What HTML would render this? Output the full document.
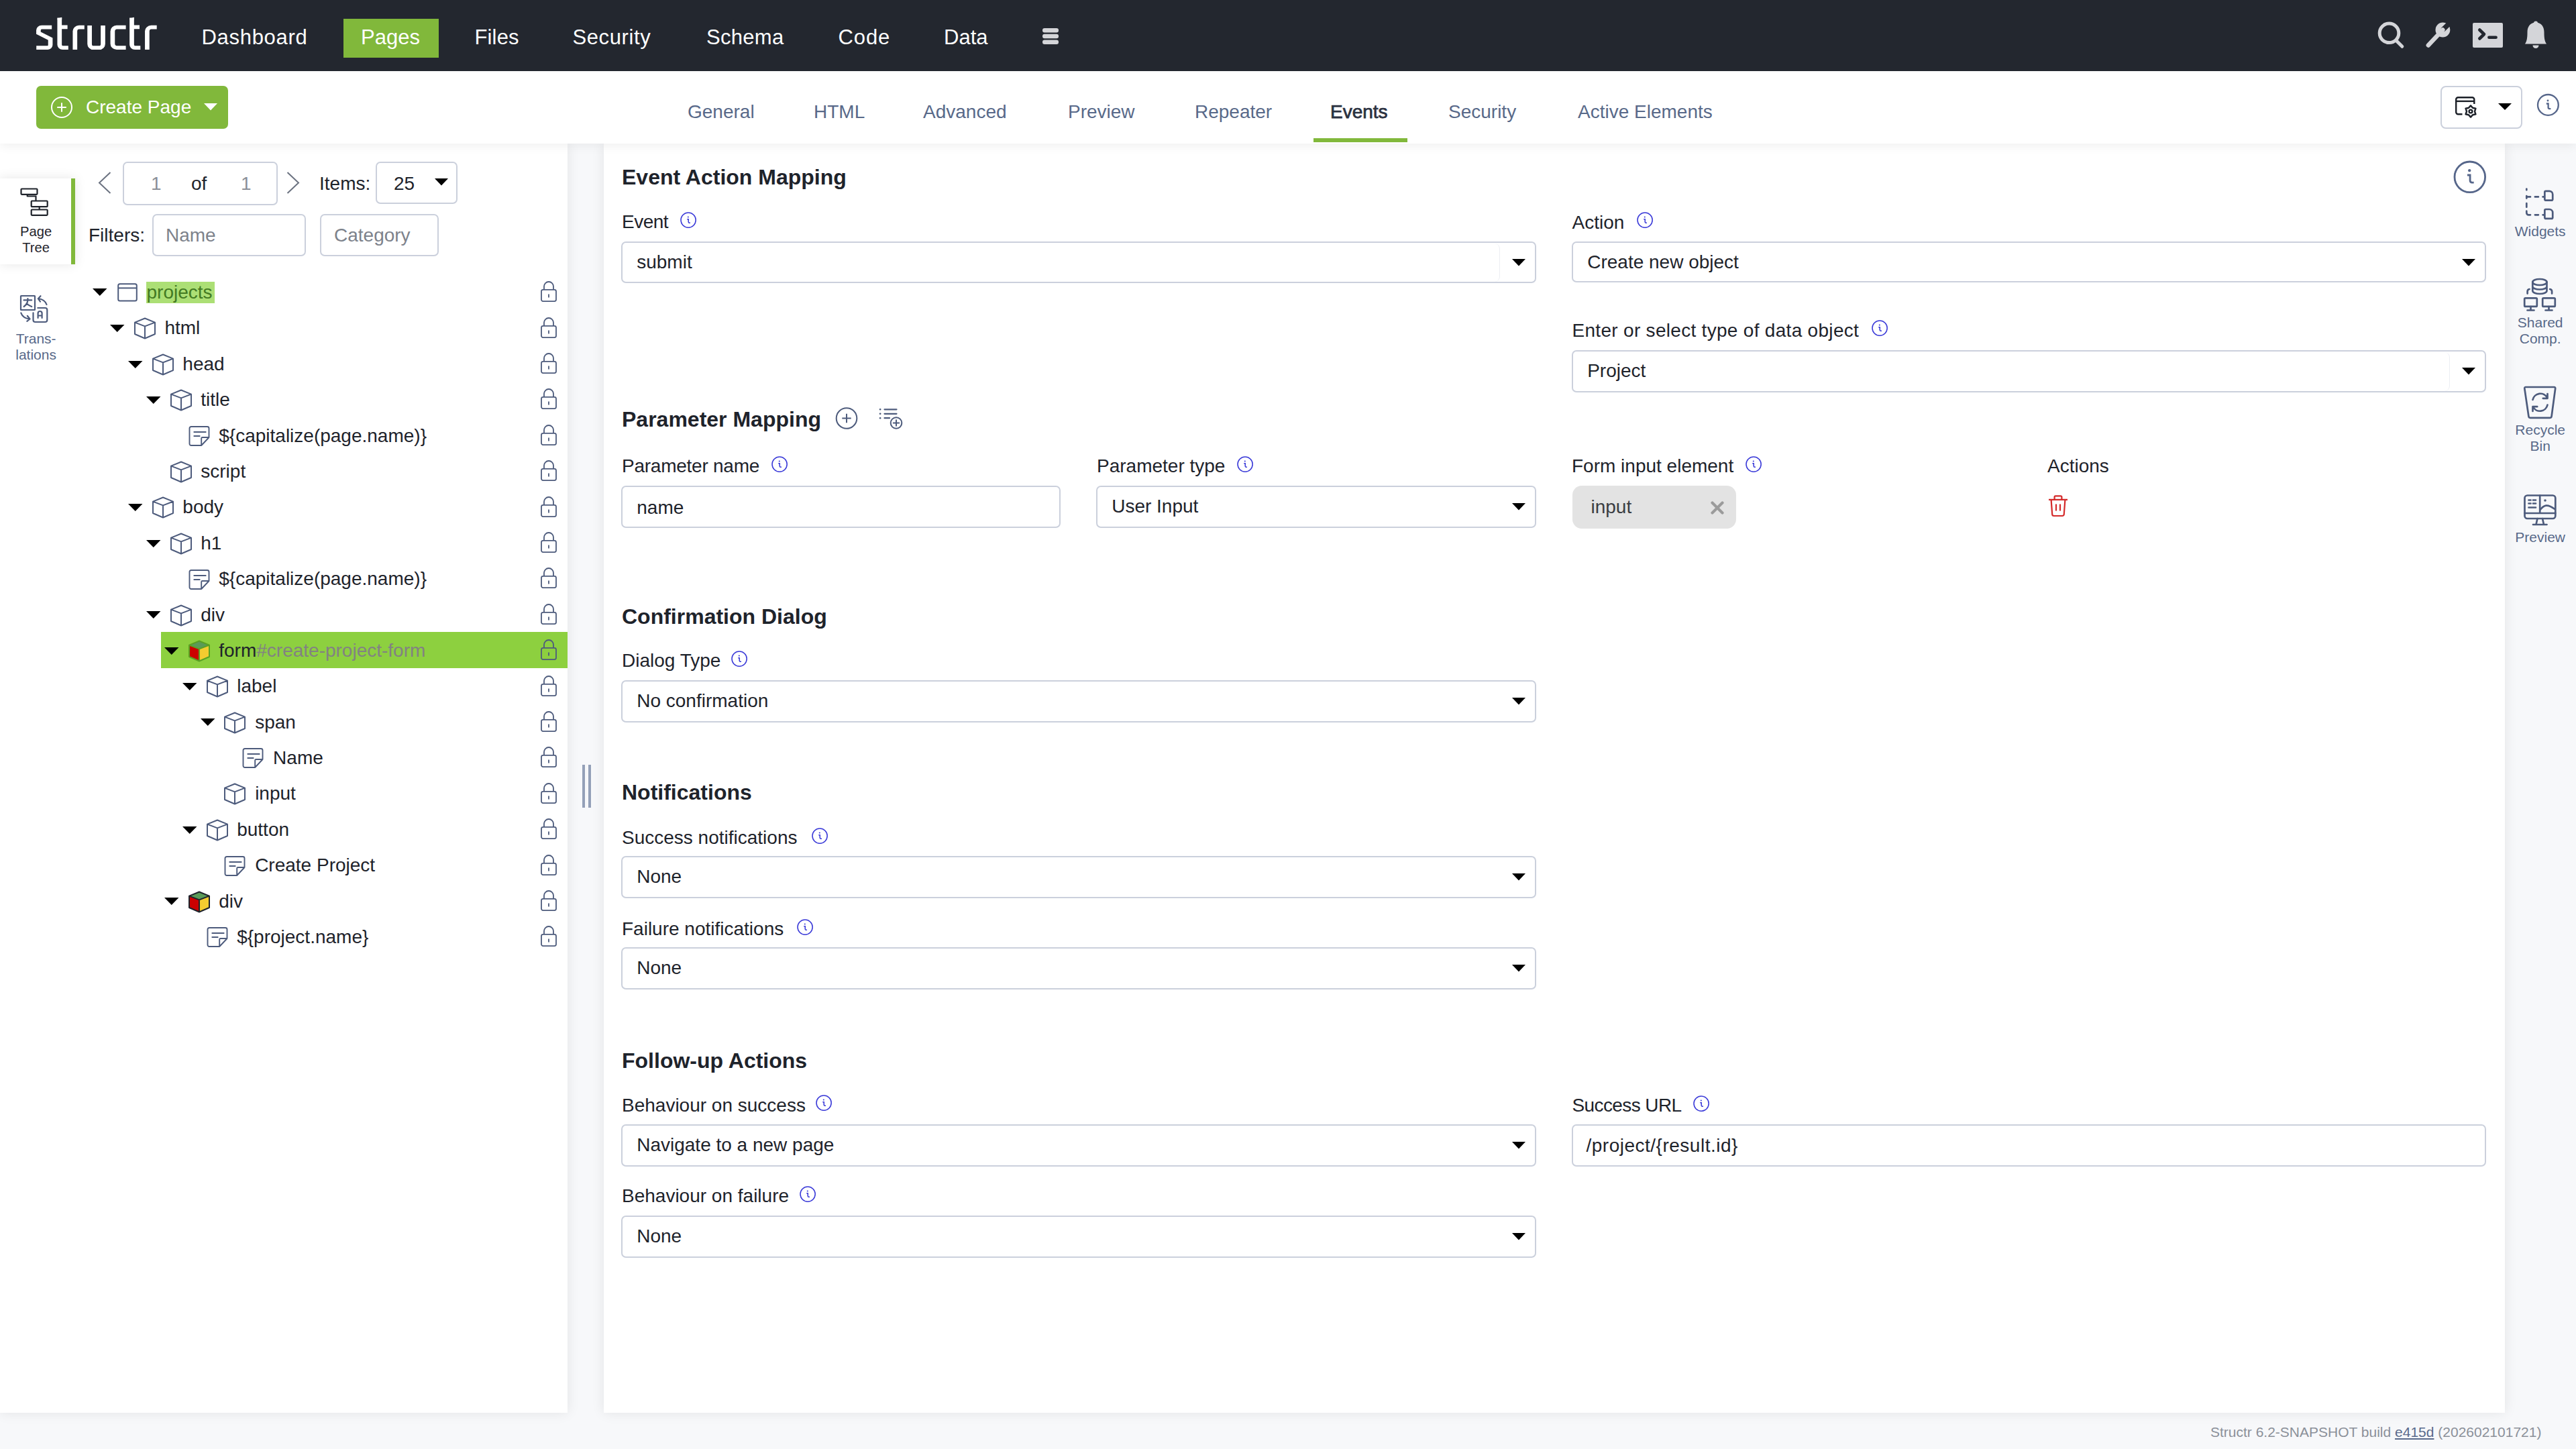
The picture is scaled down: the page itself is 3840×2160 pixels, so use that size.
<!DOCTYPE html><html><head><meta charset="utf-8"><style>
*{box-sizing:border-box;margin:0;padding:0}
html,body{width:3840px;height:2160px;overflow:hidden}
body{background:#f7f8fa;font-family:"Liberation Sans",sans-serif;position:relative}
.t{position:absolute;white-space:nowrap}
.a{position:absolute}
svg{position:absolute;overflow:visible}
</style></head><body>
<div class="a" style="left:0;top:214px;width:846px;height:1892px;background:#fff;box-shadow:0 0 18px rgba(0,0,0,0.085)"></div>
<div class="a" style="left:900px;top:214px;width:2834px;height:1892px;background:#fff;box-shadow:0 0 18px rgba(0,0,0,0.085)"></div>
<div class="a" style="left:0;top:106px;width:3840px;height:108px;background:#fff;box-shadow:0 4px 14px rgba(0,0,0,0.06)"></div>
<div class="a" style="left:0;top:0;width:3840px;height:106px;background:#23272f"></div>
<svg width="260" height="106" style="left:0;top:0" fill="none" stroke="#fff" stroke-width="6.7"><g transform="translate(0,71.2) scale(1,0.85) translate(0,-71.2)">
<path d="M77.2,35.3 H62.2 A4.8,5.2 0 0 0 57.4,40.5 V45.2 L75.1,55.7 V66 A3.8,5.2 0 0 1 71.3,71.2 H54.2"/>
<path d="M88.8,18.5 V65.7 A4.7,5.5 0 0 0 93.5,71.2 H101.8 M88.8,35.0 H100.6"/>
<path d="M111.8,74.5 V42 A6,7 0 0 1 117.8,35.3 H125.8"/>
<path d="M133.6,32 V64.5 A5.7,6.7 0 0 0 139.3,71.2 H147.8 A5.7,6.7 0 0 0 153.5,64.5 V32"/>
<path d="M187.6,35.3 H174 A6,7 0 0 0 167.9,42.3 V64.2 A6,7 0 0 0 174,71.2 H187.6"/>
<path d="M196.5,18.5 V65.7 A4.7,5.5 0 0 0 201.2,71.2 H209.3 M196.5,35.0 H208"/>
<path d="M219.4,74.5 V42 A6,7 0 0 1 225.4,35.3 H233.7"/>
</g><path d="M85.4,27.8 L92.2,25.8 V29 H85.4 Z M193.1,27.8 L199.9,25.8 V29 H193.1 Z" fill="#fff" stroke="none"/></svg>
<div class="a" style="left:512px;top:28px;width:142px;height:58px;background:#81b83b"></div>
<div class="t" style="left:300.50px;top:39.76px;font-size:31px;line-height:31px;color:#fff;font-weight:400;letter-spacing:0.7px">Dashboard</div>
<div class="t" style="left:538.00px;top:39.76px;font-size:31px;line-height:31px;color:#fff;font-weight:400;letter-spacing:0px">Pages</div>
<div class="t" style="left:707.50px;top:39.76px;font-size:31px;line-height:31px;color:#fff;font-weight:400;letter-spacing:0.15px">Files</div>
<div class="t" style="left:853.50px;top:39.76px;font-size:31px;line-height:31px;color:#fff;font-weight:400;letter-spacing:0.6px">Security</div>
<div class="t" style="left:1053.00px;top:39.76px;font-size:31px;line-height:31px;color:#fff;font-weight:400;letter-spacing:0.3px">Schema</div>
<div class="t" style="left:1249.50px;top:39.76px;font-size:31px;line-height:31px;color:#fff;font-weight:400;letter-spacing:0.9px">Code</div>
<div class="t" style="left:1407.00px;top:39.76px;font-size:31px;line-height:31px;color:#fff;font-weight:400;letter-spacing:0px">Data</div>
<svg width="30" height="30" style="left:1554px;top:42px" fill="#d4d5d9"><rect x="0" y="0" width="24" height="6.5" rx="3"/><rect x="0" y="8.8" width="24" height="6.5" rx="3"/><rect x="0" y="17.5" width="24" height="6.5" rx="3"/></svg>
<svg width="60" height="60" style="left:3530px;top:20px" fill="none" stroke="#d4d5d9" stroke-width="5" stroke-linecap="round"><circle cx="31.5" cy="29.3" r="14.3"/><path d="M42,40.5 L50.8,49.3"/></svg>
<svg width="60" height="60" style="left:3600px;top:20px"><defs><mask id="wm"><rect width="60" height="60" fill="#fff"/><path d="M42.6,23.3 L56,10" stroke="#000" stroke-width="7.4" stroke-linecap="round"/></mask></defs><g mask="url(#wm)" fill="#d4d5d9"><circle cx="41.4" cy="24.5" r="10.9"/></g><path d="M41.4,24.5 L19.8,47.5" stroke="#d4d5d9" stroke-width="6.4" stroke-linecap="round"/></svg>
<svg width="60" height="60" style="left:3680px;top:28px"><rect x="6" y="6" width="45" height="37" rx="2" fill="#d4d5d9"/><path d="M16.3,16.5 L23,23 L16.3,29.5" fill="none" stroke="#23272f" stroke-width="4.6" stroke-linecap="round" stroke-linejoin="round"/><path d="M30.4,27.7 H40.6" stroke="#23272f" stroke-width="4.6" stroke-linecap="round"/></svg>
<svg width="60" height="60" style="left:3750px;top:28px" fill="#d4d5d9"><circle cx="30" cy="6.5" r="3"/><path d="M30,5.5 C21.5,5.5 17.5,12 17.5,20 C17.5,28 17,33 14,37.6 L46,37.6 C43,33 42.5,28 42.5,20 C42.5,12 38.5,5.5 30,5.5 Z"/><path d="M25.5,39.5 H34.5 A4.5,4.5 0 0 1 25.5,39.5 Z"/></svg>
<div class="a" style="left:54px;top:128px;width:286px;height:64px;background:#81b83b;border-radius:7px"></div>
<svg width="40" height="40" style="left:72px;top:140px" fill="none" stroke="#fff" stroke-width="2"><circle cx="20" cy="20" r="15"/><path d="M20,13.2 V26.8 M13.2,20 H26.8"/></svg>
<div class="t" style="left:128.00px;top:146.30px;font-size:28px;line-height:28px;color:#fff;font-weight:400;">Create Page</div>
<svg width="24" height="14" style="left:304px;top:153.5px"><path d="M0,0 H20 L10,10.5 Z" fill="#fff"/></svg>
<div class="t" style="left:1025.00px;top:153.10px;font-size:28px;line-height:28px;color:#586989;font-weight:400;">General</div>
<div class="t" style="left:1213.00px;top:153.10px;font-size:28px;line-height:28px;color:#586989;font-weight:400;">HTML</div>
<div class="t" style="left:1376.00px;top:153.10px;font-size:28px;line-height:28px;color:#586989;font-weight:400;">Advanced</div>
<div class="t" style="left:1592.00px;top:153.10px;font-size:28px;line-height:28px;color:#586989;font-weight:400;">Preview</div>
<div class="t" style="left:1781.00px;top:153.10px;font-size:28px;line-height:28px;color:#586989;font-weight:400;">Repeater</div>
<div class="t" style="left:2159.00px;top:153.10px;font-size:28px;line-height:28px;color:#586989;font-weight:400;">Security</div>
<div class="t" style="left:2352.00px;top:153.10px;font-size:28px;line-height:28px;color:#586989;font-weight:400;">Active Elements</div>
<div class="t" style="left:1983.00px;top:153.10px;font-size:28px;line-height:28px;color:#2a3140;font-weight:400;-webkit-text-stroke:0.75px #2a3140">Events</div>
<div class="a" style="left:1958px;top:205.5px;width:140px;height:6.5px;background:#81b83b"></div>
<div class="a" style="left:3638px;top:128px;width:122px;height:64px;border:2px solid #cbd0dc;border-radius:8px;background:#fff"></div>
<svg width="40" height="40" style="left:3650px;top:136px" fill="none" stroke="#1b1f27" stroke-width="2.4">
<path d="M20.5,34.3 H14.2 A3,3 0 0 1 11.2,31.3 V12.2 A3,3 0 0 1 14.2,9.2 H35.3 A3,3 0 0 1 38.3,12.2 V19"/><path d="M11.2,14.9 H38.3"/>
<path d="M33.00,21.40 L36.00,24.80 L40.45,25.70 L39.00,30.00 L40.45,34.30 L36.00,35.20 L33.00,38.60 L30.00,35.20 L25.55,34.30 L27.00,30.00 L25.55,25.70 L30.00,24.80 Z" stroke-linejoin="round"/><circle cx="33" cy="30" r="2.4"/>
</svg>
<svg width="24" height="14" style="left:3724px;top:154px"><path d="M0,0 H20 L10,10 Z" fill="#000"/></svg>
<svg width="36.8" height="36.8" style="left:3779.6px;top:137.6px" fill="none" stroke="#56668a" stroke-width="2.3" stroke-linecap="round"><circle cx="18.4" cy="18.4" r="15.4"/><circle cx="18.00" cy="11.94" r="1.44" fill="#56668a" stroke="none"/><path d="M15.82,16.51 H18.60 V21.98 Q18.60,24.06 20.69,24.06 H22.37" stroke-width="2.3" stroke-linecap="butt"/></svg>
<div class="a" style="left:0;top:266px;width:112px;height:128px;background:#fff;box-shadow:0 0 16px rgba(0,0,0,0.10)"></div>
<div class="a" style="left:106px;top:266px;width:6px;height:128px;background:#81b83b"></div>
<svg width="50" height="50" style="left:20px;top:270px" fill="none" stroke="#1f232b" stroke-width="2.2" stroke-linejoin="round"><rect x="11.5" y="11.5" width="24" height="8.3" rx="1"/><rect x="26.7" y="29.5" width="24" height="8.7" rx="1"/><rect x="26.7" y="42.5" width="24" height="8.3" rx="1"/><path d="M20.7,19.8 V22.5 H33.5 V29.5 M38.7,37.5 V42.5"/></svg>
<div class="t" style="left:-46.40px;width:200px;text-align:center;top:334.90px;font-size:20.2px;line-height:20.2px;color:#1f232b;font-weight:400;">Page</div>
<div class="t" style="left:-46.40px;width:200px;text-align:center;top:358.90px;font-size:20.2px;line-height:20.2px;color:#1f232b;font-weight:400;">Tree</div>
<svg width="50" height="50" style="left:20px;top:436px" fill="none" stroke="#4d5b7c" stroke-width="2.2" stroke-linecap="round" stroke-linejoin="round">
<rect x="11" y="5" width="21" height="21" rx="0.5"/>
<path d="M15.5,11.4 H27.2 M21.4,9 V11.4 C21,16 18.5,19 15.6,21 M19.5,16.2 C22,18.6 24.5,20 27.2,21"/>
<path d="M49.5,18 C48,13.5 44,10 37,9 M40.5,5.2 L36.8,9.2 L40,13.6"/>
<path d="M11.3,30.5 C13,35.5 17.5,38.8 24.6,39.5 M20.8,34.8 L24.5,39.5 L20.3,42.8"/>
<path d="M36.3,23 H47.3 A3,3 0 0 1 50.3,26 V41 A3,3 0 0 1 47.3,44 H32.5 A3,3 0 0 1 29.5,41 V30.3"/>
<path d="M36.6,38 V31 A3,3 0 0 1 42.6,31 V38 M36.6,34.5 H42.6"/>
</svg>
<div class="t" style="left:-46.40px;width:200px;text-align:center;top:494.22px;font-size:21px;line-height:21px;color:#586989;font-weight:400;">Trans-</div>
<div class="t" style="left:-46.40px;width:200px;text-align:center;top:517.72px;font-size:21px;line-height:21px;color:#586989;font-weight:400;">lations</div>
<svg width="30" height="40" style="left:140px;top:252px" fill="none" stroke="#6b7280" stroke-width="2"><path d="M24.5,5 L8,20.5 L24.5,36"/></svg>
<div class="a" style="left:182.5px;top:240.5px;width:231px;height:65px;border:2px solid #cbd0dc;border-radius:7px"></div>
<div class="t" style="left:225.00px;top:259.60px;font-size:28px;line-height:28px;color:#8a8f98;font-weight:400;">1</div>
<div class="t" style="left:285.00px;top:259.60px;font-size:28px;line-height:28px;color:#1e232b;font-weight:400;">of</div>
<div class="t" style="left:359.00px;top:259.60px;font-size:28px;line-height:28px;color:#8a8f98;font-weight:400;">1</div>
<svg width="30" height="40" style="left:422px;top:252px" fill="none" stroke="#6b7280" stroke-width="2"><path d="M6.5,5 L23,20.5 L6.5,36"/></svg>
<div class="t" style="left:476.00px;top:259.50px;font-size:28px;line-height:28px;color:#1e232b;font-weight:400;">Items:</div>
<div class="a" style="left:560px;top:240.5px;width:121.5px;height:63px;border:2px solid #cbd0dc;border-radius:7px"></div>
<div class="t" style="left:587.00px;top:259.50px;font-size:28px;line-height:28px;color:#1e232b;font-weight:400;">25</div>
<svg width="24" height="14" style="left:648px;top:265.5px"><path d="M0,0 H20 L10,10.5 Z" fill="#000"/></svg>
<div class="t" style="left:132.00px;top:336.50px;font-size:28px;line-height:28px;color:#1e232b;font-weight:400;">Filters:</div>
<div class="a" style="left:226.5px;top:318.5px;width:229px;height:63px;border:2px solid #cbd0dc;border-radius:7px"></div>
<div class="t" style="left:247.00px;top:336.80px;font-size:28px;line-height:28px;color:#7d828b;font-weight:400;">Name</div>
<div class="a" style="left:476.5px;top:318.5px;width:177px;height:63px;border:2px solid #cbd0dc;border-radius:7px"></div>
<div class="t" style="left:498.00px;top:336.80px;font-size:28px;line-height:28px;color:#7d828b;font-weight:400;">Category</div>
<svg width="24" height="14" style="left:137.95px;top:429.80px"><path d="M0,0 H21.5 L10.75,11 Z" fill="#000"/></svg>
<svg width="32" height="30" style="left:175px;top:421.60px"><rect x="1.2" y="1.2" width="27.6" height="25.4" rx="2.5" fill="none" stroke="#4d5b7c" stroke-width="2"/><path d="M1.2,7.4 H28.8" stroke="#4d5b7c" stroke-width="2"/></svg>
<div class="a" style="left:218px;top:420px;width:102px;height:32px;background:#acdf75"></div>
<div class="t" style="left:218.50px;top:422.00px;font-size:28px;line-height:28px;color:#437a22;font-weight:400;">projects</div>
<svg width="26" height="32" style="left:805.5px;top:419.30px"><rect x="1" y="12.8" width="22" height="17.3" rx="2.5" fill="none" stroke="#4d5b7c" stroke-width="1.8"/><path d="M5,12.8 V8 A7,7 0 0 1 19,8 V12.8 M12,19.5 V24.5" fill="none" stroke="#4d5b7c" stroke-width="1.8"/></svg>
<svg width="24" height="14" style="left:163.90px;top:484.19px"><path d="M0,0 H21.5 L10.75,11 Z" fill="#000"/></svg>
<svg width="32" height="33" style="left:199.70px;top:473.39px"><path d="M16,1.5 L31,7.6 V25 L16,31.5 L1,25 V7.6 Z M1,7.6 L16,13.4 L31,7.6 M16,13.4 V31.5" fill="none" stroke="#4d5b7c" stroke-width="2" stroke-linejoin="round"/></svg>
<div class="t" style="left:245.40px;top:475.39px;font-size:28px;line-height:28px;color:#1e232b;font-weight:400;">html</div>
<svg width="26" height="32" style="left:805.5px;top:472.69px"><rect x="1" y="12.8" width="22" height="17.3" rx="2.5" fill="none" stroke="#4d5b7c" stroke-width="1.8"/><path d="M5,12.8 V8 A7,7 0 0 1 19,8 V12.8 M12,19.5 V24.5" fill="none" stroke="#4d5b7c" stroke-width="1.8"/></svg>
<svg width="24" height="14" style="left:190.85px;top:537.58px"><path d="M0,0 H21.5 L10.75,11 Z" fill="#000"/></svg>
<svg width="32" height="33" style="left:226.65px;top:526.78px"><path d="M16,1.5 L31,7.6 V25 L16,31.5 L1,25 V7.6 Z M1,7.6 L16,13.4 L31,7.6 M16,13.4 V31.5" fill="none" stroke="#4d5b7c" stroke-width="2" stroke-linejoin="round"/></svg>
<div class="t" style="left:272.35px;top:528.78px;font-size:28px;line-height:28px;color:#1e232b;font-weight:400;">head</div>
<svg width="26" height="32" style="left:805.5px;top:526.08px"><rect x="1" y="12.8" width="22" height="17.3" rx="2.5" fill="none" stroke="#4d5b7c" stroke-width="1.8"/><path d="M5,12.8 V8 A7,7 0 0 1 19,8 V12.8 M12,19.5 V24.5" fill="none" stroke="#4d5b7c" stroke-width="1.8"/></svg>
<svg width="24" height="14" style="left:217.80px;top:590.97px"><path d="M0,0 H21.5 L10.75,11 Z" fill="#000"/></svg>
<svg width="32" height="33" style="left:253.60px;top:580.17px"><path d="M16,1.5 L31,7.6 V25 L16,31.5 L1,25 V7.6 Z M1,7.6 L16,13.4 L31,7.6 M16,13.4 V31.5" fill="none" stroke="#4d5b7c" stroke-width="2" stroke-linejoin="round"/></svg>
<div class="t" style="left:299.30px;top:582.17px;font-size:28px;line-height:28px;color:#1e232b;font-weight:400;">title</div>
<svg width="26" height="32" style="left:805.5px;top:579.47px"><rect x="1" y="12.8" width="22" height="17.3" rx="2.5" fill="none" stroke="#4d5b7c" stroke-width="1.8"/><path d="M5,12.8 V8 A7,7 0 0 1 19,8 V12.8 M12,19.5 V24.5" fill="none" stroke="#4d5b7c" stroke-width="1.8"/></svg>
<svg width="32" height="33" style="left:280.55px;top:633.96px"><path d="M19.2,30 H4 A2.5,2.5 0 0 1 1.5,27.5 V4.5 A2.5,2.5 0 0 1 4,2 H28 A2.5,2.5 0 0 1 30.5,4.5 V18 Z M19.2,30 V19.5 A1.5,1.5 0 0 1 20.7,18 H30.5 M8.3,10 H25.7 M8.3,16 H16.7" fill="none" stroke="#4d5b7c" stroke-width="1.9" stroke-linejoin="round" stroke-linecap="round"/></svg>
<div class="t" style="left:326.25px;top:635.56px;font-size:28px;line-height:28px;color:#1e232b;font-weight:400;">${capitalize(page.name)}</div>
<svg width="26" height="32" style="left:805.5px;top:632.86px"><rect x="1" y="12.8" width="22" height="17.3" rx="2.5" fill="none" stroke="#4d5b7c" stroke-width="1.8"/><path d="M5,12.8 V8 A7,7 0 0 1 19,8 V12.8 M12,19.5 V24.5" fill="none" stroke="#4d5b7c" stroke-width="1.8"/></svg>
<svg width="32" height="33" style="left:253.60px;top:686.95px"><path d="M16,1.5 L31,7.6 V25 L16,31.5 L1,25 V7.6 Z M1,7.6 L16,13.4 L31,7.6 M16,13.4 V31.5" fill="none" stroke="#4d5b7c" stroke-width="2" stroke-linejoin="round"/></svg>
<div class="t" style="left:299.30px;top:688.95px;font-size:28px;line-height:28px;color:#1e232b;font-weight:400;">script</div>
<svg width="26" height="32" style="left:805.5px;top:686.25px"><rect x="1" y="12.8" width="22" height="17.3" rx="2.5" fill="none" stroke="#4d5b7c" stroke-width="1.8"/><path d="M5,12.8 V8 A7,7 0 0 1 19,8 V12.8 M12,19.5 V24.5" fill="none" stroke="#4d5b7c" stroke-width="1.8"/></svg>
<svg width="24" height="14" style="left:190.85px;top:751.14px"><path d="M0,0 H21.5 L10.75,11 Z" fill="#000"/></svg>
<svg width="32" height="33" style="left:226.65px;top:740.34px"><path d="M16,1.5 L31,7.6 V25 L16,31.5 L1,25 V7.6 Z M1,7.6 L16,13.4 L31,7.6 M16,13.4 V31.5" fill="none" stroke="#4d5b7c" stroke-width="2" stroke-linejoin="round"/></svg>
<div class="t" style="left:272.35px;top:742.34px;font-size:28px;line-height:28px;color:#1e232b;font-weight:400;">body</div>
<svg width="26" height="32" style="left:805.5px;top:739.64px"><rect x="1" y="12.8" width="22" height="17.3" rx="2.5" fill="none" stroke="#4d5b7c" stroke-width="1.8"/><path d="M5,12.8 V8 A7,7 0 0 1 19,8 V12.8 M12,19.5 V24.5" fill="none" stroke="#4d5b7c" stroke-width="1.8"/></svg>
<svg width="24" height="14" style="left:217.80px;top:804.53px"><path d="M0,0 H21.5 L10.75,11 Z" fill="#000"/></svg>
<svg width="32" height="33" style="left:253.60px;top:793.73px"><path d="M16,1.5 L31,7.6 V25 L16,31.5 L1,25 V7.6 Z M1,7.6 L16,13.4 L31,7.6 M16,13.4 V31.5" fill="none" stroke="#4d5b7c" stroke-width="2" stroke-linejoin="round"/></svg>
<div class="t" style="left:299.30px;top:795.73px;font-size:28px;line-height:28px;color:#1e232b;font-weight:400;">h1</div>
<svg width="26" height="32" style="left:805.5px;top:793.03px"><rect x="1" y="12.8" width="22" height="17.3" rx="2.5" fill="none" stroke="#4d5b7c" stroke-width="1.8"/><path d="M5,12.8 V8 A7,7 0 0 1 19,8 V12.8 M12,19.5 V24.5" fill="none" stroke="#4d5b7c" stroke-width="1.8"/></svg>
<svg width="32" height="33" style="left:280.55px;top:847.52px"><path d="M19.2,30 H4 A2.5,2.5 0 0 1 1.5,27.5 V4.5 A2.5,2.5 0 0 1 4,2 H28 A2.5,2.5 0 0 1 30.5,4.5 V18 Z M19.2,30 V19.5 A1.5,1.5 0 0 1 20.7,18 H30.5 M8.3,10 H25.7 M8.3,16 H16.7" fill="none" stroke="#4d5b7c" stroke-width="1.9" stroke-linejoin="round" stroke-linecap="round"/></svg>
<div class="t" style="left:326.25px;top:849.12px;font-size:28px;line-height:28px;color:#1e232b;font-weight:400;">${capitalize(page.name)}</div>
<svg width="26" height="32" style="left:805.5px;top:846.42px"><rect x="1" y="12.8" width="22" height="17.3" rx="2.5" fill="none" stroke="#4d5b7c" stroke-width="1.8"/><path d="M5,12.8 V8 A7,7 0 0 1 19,8 V12.8 M12,19.5 V24.5" fill="none" stroke="#4d5b7c" stroke-width="1.8"/></svg>
<svg width="24" height="14" style="left:217.80px;top:911.31px"><path d="M0,0 H21.5 L10.75,11 Z" fill="#000"/></svg>
<svg width="32" height="33" style="left:253.60px;top:900.51px"><path d="M16,1.5 L31,7.6 V25 L16,31.5 L1,25 V7.6 Z M1,7.6 L16,13.4 L31,7.6 M16,13.4 V31.5" fill="none" stroke="#4d5b7c" stroke-width="2" stroke-linejoin="round"/></svg>
<div class="t" style="left:299.30px;top:902.51px;font-size:28px;line-height:28px;color:#1e232b;font-weight:400;">div</div>
<svg width="26" height="32" style="left:805.5px;top:899.81px"><rect x="1" y="12.8" width="22" height="17.3" rx="2.5" fill="none" stroke="#4d5b7c" stroke-width="1.8"/><path d="M5,12.8 V8 A7,7 0 0 1 19,8 V12.8 M12,19.5 V24.5" fill="none" stroke="#4d5b7c" stroke-width="1.8"/></svg>
<div class="a" style="left:240px;top:942.10px;width:606px;height:53.8px;background:#8dd03f"></div>
<svg width="24" height="14" style="left:244.75px;top:964.70px"><path d="M0,0 H21.5 L10.75,11 Z" fill="#000"/></svg>
<svg width="32" height="33" style="left:280.55px;top:953.90px"><path d="M16,13.4 L1,7.6 V25 L16,31.5 Z" fill="#cc0000"/><path d="M16,13.4 L31,7.6 V25 L16,31.5 Z" fill="#f4cc30"/><path d="M1,7.6 L16,1.5 L31,7.6 L16,13.4 Z" fill="#5a9a58"/><path d="M16,1.5 L31,7.6 V25 L16,31.5 L1,25 V7.6 Z M1,7.6 L16,13.4 L31,7.6 M16,13.4 V31.5" fill="none" stroke="#5aa123" stroke-width="2" stroke-linejoin="round"/></svg>
<div class="t" style="left:326.25px;top:955.90px;font-size:28px;line-height:28px;color:#1e232b;font-weight:400;">form<span style="color:#828282">#create-project-form</span></div>
<svg width="26" height="32" style="left:805.5px;top:953.20px"><rect x="1" y="12.8" width="22" height="17.3" rx="2.5" fill="none" stroke="#4d5b7c" stroke-width="1.8"/><path d="M5,12.8 V8 A7,7 0 0 1 19,8 V12.8 M12,19.5 V24.5" fill="none" stroke="#4d5b7c" stroke-width="1.8"/></svg>
<svg width="24" height="14" style="left:271.70px;top:1018.09px"><path d="M0,0 H21.5 L10.75,11 Z" fill="#000"/></svg>
<svg width="32" height="33" style="left:307.50px;top:1007.29px"><path d="M16,1.5 L31,7.6 V25 L16,31.5 L1,25 V7.6 Z M1,7.6 L16,13.4 L31,7.6 M16,13.4 V31.5" fill="none" stroke="#4d5b7c" stroke-width="2" stroke-linejoin="round"/></svg>
<div class="t" style="left:353.20px;top:1009.29px;font-size:28px;line-height:28px;color:#1e232b;font-weight:400;">label</div>
<svg width="26" height="32" style="left:805.5px;top:1006.59px"><rect x="1" y="12.8" width="22" height="17.3" rx="2.5" fill="none" stroke="#4d5b7c" stroke-width="1.8"/><path d="M5,12.8 V8 A7,7 0 0 1 19,8 V12.8 M12,19.5 V24.5" fill="none" stroke="#4d5b7c" stroke-width="1.8"/></svg>
<svg width="24" height="14" style="left:298.65px;top:1071.48px"><path d="M0,0 H21.5 L10.75,11 Z" fill="#000"/></svg>
<svg width="32" height="33" style="left:334.45px;top:1060.68px"><path d="M16,1.5 L31,7.6 V25 L16,31.5 L1,25 V7.6 Z M1,7.6 L16,13.4 L31,7.6 M16,13.4 V31.5" fill="none" stroke="#4d5b7c" stroke-width="2" stroke-linejoin="round"/></svg>
<div class="t" style="left:380.15px;top:1062.68px;font-size:28px;line-height:28px;color:#1e232b;font-weight:400;">span</div>
<svg width="26" height="32" style="left:805.5px;top:1059.98px"><rect x="1" y="12.8" width="22" height="17.3" rx="2.5" fill="none" stroke="#4d5b7c" stroke-width="1.8"/><path d="M5,12.8 V8 A7,7 0 0 1 19,8 V12.8 M12,19.5 V24.5" fill="none" stroke="#4d5b7c" stroke-width="1.8"/></svg>
<svg width="32" height="33" style="left:361.40px;top:1114.47px"><path d="M19.2,30 H4 A2.5,2.5 0 0 1 1.5,27.5 V4.5 A2.5,2.5 0 0 1 4,2 H28 A2.5,2.5 0 0 1 30.5,4.5 V18 Z M19.2,30 V19.5 A1.5,1.5 0 0 1 20.7,18 H30.5 M8.3,10 H25.7 M8.3,16 H16.7" fill="none" stroke="#4d5b7c" stroke-width="1.9" stroke-linejoin="round" stroke-linecap="round"/></svg>
<div class="t" style="left:407.10px;top:1116.07px;font-size:28px;line-height:28px;color:#1e232b;font-weight:400;">Name</div>
<svg width="26" height="32" style="left:805.5px;top:1113.37px"><rect x="1" y="12.8" width="22" height="17.3" rx="2.5" fill="none" stroke="#4d5b7c" stroke-width="1.8"/><path d="M5,12.8 V8 A7,7 0 0 1 19,8 V12.8 M12,19.5 V24.5" fill="none" stroke="#4d5b7c" stroke-width="1.8"/></svg>
<svg width="32" height="33" style="left:334.45px;top:1167.46px"><path d="M16,1.5 L31,7.6 V25 L16,31.5 L1,25 V7.6 Z M1,7.6 L16,13.4 L31,7.6 M16,13.4 V31.5" fill="none" stroke="#4d5b7c" stroke-width="2" stroke-linejoin="round"/></svg>
<div class="t" style="left:380.15px;top:1169.46px;font-size:28px;line-height:28px;color:#1e232b;font-weight:400;">input</div>
<svg width="26" height="32" style="left:805.5px;top:1166.76px"><rect x="1" y="12.8" width="22" height="17.3" rx="2.5" fill="none" stroke="#4d5b7c" stroke-width="1.8"/><path d="M5,12.8 V8 A7,7 0 0 1 19,8 V12.8 M12,19.5 V24.5" fill="none" stroke="#4d5b7c" stroke-width="1.8"/></svg>
<svg width="24" height="14" style="left:271.70px;top:1231.65px"><path d="M0,0 H21.5 L10.75,11 Z" fill="#000"/></svg>
<svg width="32" height="33" style="left:307.50px;top:1220.85px"><path d="M16,1.5 L31,7.6 V25 L16,31.5 L1,25 V7.6 Z M1,7.6 L16,13.4 L31,7.6 M16,13.4 V31.5" fill="none" stroke="#4d5b7c" stroke-width="2" stroke-linejoin="round"/></svg>
<div class="t" style="left:353.20px;top:1222.85px;font-size:28px;line-height:28px;color:#1e232b;font-weight:400;">button</div>
<svg width="26" height="32" style="left:805.5px;top:1220.15px"><rect x="1" y="12.8" width="22" height="17.3" rx="2.5" fill="none" stroke="#4d5b7c" stroke-width="1.8"/><path d="M5,12.8 V8 A7,7 0 0 1 19,8 V12.8 M12,19.5 V24.5" fill="none" stroke="#4d5b7c" stroke-width="1.8"/></svg>
<svg width="32" height="33" style="left:334.45px;top:1274.64px"><path d="M19.2,30 H4 A2.5,2.5 0 0 1 1.5,27.5 V4.5 A2.5,2.5 0 0 1 4,2 H28 A2.5,2.5 0 0 1 30.5,4.5 V18 Z M19.2,30 V19.5 A1.5,1.5 0 0 1 20.7,18 H30.5 M8.3,10 H25.7 M8.3,16 H16.7" fill="none" stroke="#4d5b7c" stroke-width="1.9" stroke-linejoin="round" stroke-linecap="round"/></svg>
<div class="t" style="left:380.15px;top:1276.24px;font-size:28px;line-height:28px;color:#1e232b;font-weight:400;">Create Project</div>
<svg width="26" height="32" style="left:805.5px;top:1273.54px"><rect x="1" y="12.8" width="22" height="17.3" rx="2.5" fill="none" stroke="#4d5b7c" stroke-width="1.8"/><path d="M5,12.8 V8 A7,7 0 0 1 19,8 V12.8 M12,19.5 V24.5" fill="none" stroke="#4d5b7c" stroke-width="1.8"/></svg>
<svg width="24" height="14" style="left:244.75px;top:1338.43px"><path d="M0,0 H21.5 L10.75,11 Z" fill="#000"/></svg>
<svg width="32" height="33" style="left:280.55px;top:1327.63px"><path d="M16,13.4 L1,7.6 V25 L16,31.5 Z" fill="#cc0000"/><path d="M16,13.4 L31,7.6 V25 L16,31.5 Z" fill="#f4cc30"/><path d="M1,7.6 L16,1.5 L31,7.6 L16,13.4 Z" fill="#5a9a58"/><path d="M16,1.5 L31,7.6 V25 L16,31.5 L1,25 V7.6 Z M1,7.6 L16,13.4 L31,7.6 M16,13.4 V31.5" fill="none" stroke="#1e232b" stroke-width="2" stroke-linejoin="round"/></svg>
<div class="t" style="left:326.25px;top:1329.63px;font-size:28px;line-height:28px;color:#1e232b;font-weight:400;">div</div>
<svg width="26" height="32" style="left:805.5px;top:1326.93px"><rect x="1" y="12.8" width="22" height="17.3" rx="2.5" fill="none" stroke="#4d5b7c" stroke-width="1.8"/><path d="M5,12.8 V8 A7,7 0 0 1 19,8 V12.8 M12,19.5 V24.5" fill="none" stroke="#4d5b7c" stroke-width="1.8"/></svg>
<svg width="32" height="33" style="left:307.50px;top:1381.42px"><path d="M19.2,30 H4 A2.5,2.5 0 0 1 1.5,27.5 V4.5 A2.5,2.5 0 0 1 4,2 H28 A2.5,2.5 0 0 1 30.5,4.5 V18 Z M19.2,30 V19.5 A1.5,1.5 0 0 1 20.7,18 H30.5 M8.3,10 H25.7 M8.3,16 H16.7" fill="none" stroke="#4d5b7c" stroke-width="1.9" stroke-linejoin="round" stroke-linecap="round"/></svg>
<div class="t" style="left:353.20px;top:1383.02px;font-size:28px;line-height:28px;color:#1e232b;font-weight:400;">${project.name}</div>
<svg width="26" height="32" style="left:805.5px;top:1380.32px"><rect x="1" y="12.8" width="22" height="17.3" rx="2.5" fill="none" stroke="#4d5b7c" stroke-width="1.8"/><path d="M5,12.8 V8 A7,7 0 0 1 19,8 V12.8 M12,19.5 V24.5" fill="none" stroke="#4d5b7c" stroke-width="1.8"/></svg>
<div class="a" style="left:868px;top:1140px;width:3.7px;height:64px;background:#94a0b8"></div>
<div class="a" style="left:877px;top:1140px;width:4px;height:64px;background:#94a0b8"></div>
<div class="t" style="left:927.00px;top:248.41px;font-size:32px;line-height:32px;color:#1e232b;font-weight:700;">Event Action Mapping</div>
<svg width="51.6" height="51.6" style="left:3656.2px;top:238.2px" fill="none" stroke="#56668a" stroke-width="2.8" stroke-linecap="round"><circle cx="25.8" cy="25.8" r="22.8"/><circle cx="25.21" cy="16.24" r="2.13" fill="#56668a" stroke="none"/><path d="M21.98,23.01 H26.09 V31.10 Q26.09,34.18 29.18,34.18 H31.68" stroke-width="2.8" stroke-linecap="butt"/></svg>
<div class="t" style="left:927.00px;top:317.30px;font-size:28px;line-height:28px;color:#1e232b;font-weight:400;letter-spacing:-0.5px">Event</div>
<svg width="28.2" height="28.2" style="left:1011.9px;top:313.9px" fill="none" stroke="#3a3ad8" stroke-width="1.55" stroke-linecap="round"><circle cx="14.1" cy="14.1" r="11.1"/><circle cx="13.81" cy="9.45" r="1.04" fill="#3a3ad8" stroke="none"/><path d="M12.24,12.74 H14.24 V16.68 Q14.24,18.18 15.75,18.18 H16.96" stroke-width="1.55" stroke-linecap="butt"/></svg>
<div class="a" style="left:926px;top:360px;width:1364px;height:62px;border:2px solid #cbd0dc;border-radius:7px;background:#fff"></div>
<div class="t" style="left:949.20px;top:376.80px;font-size:28px;line-height:28px;color:#1e232b;font-weight:400;">submit</div>
<svg width="24" height="14" style="left:2254.1px;top:385.8px"><path d="M0,0 H20 L10,10.5 Z" fill="#000"/></svg>
<div class="a" style="left:929px;top:363px;width:1307px;height:57px;border-right:1.5px solid #eceef3;border-radius:0 8px 8px 0"></div>
<div class="t" style="left:2343.50px;top:317.70px;font-size:28px;line-height:28px;color:#1e232b;font-weight:400;letter-spacing:0px">Action</div>
<svg width="28.2" height="28.2" style="left:2437.5px;top:314.29999999999995px" fill="none" stroke="#3a3ad8" stroke-width="1.55" stroke-linecap="round"><circle cx="14.1" cy="14.1" r="11.1"/><circle cx="13.81" cy="9.45" r="1.04" fill="#3a3ad8" stroke="none"/><path d="M12.24,12.74 H14.24 V16.68 Q14.24,18.18 15.75,18.18 H16.96" stroke-width="1.55" stroke-linecap="butt"/></svg>
<div class="a" style="left:2343px;top:360px;width:1362.5px;height:61px;border:2px solid #cbd0dc;border-radius:7px;background:#fff"></div>
<div class="t" style="left:2366.20px;top:376.80px;font-size:28px;line-height:28px;color:#1e232b;font-weight:400;">Create new object</div>
<svg width="24" height="14" style="left:3669.6px;top:385.8px"><path d="M0,0 H20 L10,10.5 Z" fill="#000"/></svg>
<div class="t" style="left:2343.50px;top:478.50px;font-size:28px;line-height:28px;color:#1e232b;font-weight:400;letter-spacing:0.3px">Enter or select type of data object</div>
<svg width="28.2" height="28.2" style="left:2787.9px;top:475.09999999999997px" fill="none" stroke="#3a3ad8" stroke-width="1.55" stroke-linecap="round"><circle cx="14.1" cy="14.1" r="11.1"/><circle cx="13.81" cy="9.45" r="1.04" fill="#3a3ad8" stroke="none"/><path d="M12.24,12.74 H14.24 V16.68 Q14.24,18.18 15.75,18.18 H16.96" stroke-width="1.55" stroke-linecap="butt"/></svg>
<div class="a" style="left:2343px;top:522px;width:1362.5px;height:63px;border:2px solid #cbd0dc;border-radius:7px;background:#fff"></div>
<div class="t" style="left:2366.20px;top:538.80px;font-size:28px;line-height:28px;color:#1e232b;font-weight:400;">Project</div>
<svg width="24" height="14" style="left:3669.6px;top:547.8px"><path d="M0,0 H20 L10,10.5 Z" fill="#000"/></svg>
<div class="a" style="left:2346px;top:525px;width:1305.5px;height:58px;border-right:1.5px solid #eceef3;border-radius:0 8px 8px 0"></div>
<div class="t" style="left:927.00px;top:609.41px;font-size:32px;line-height:32px;color:#1e232b;font-weight:700;">Parameter Mapping</div>
<svg width="40" height="40" style="left:1242px;top:604px" fill="none" stroke="#4d5b7c" stroke-width="2"><circle cx="20" cy="19.5" r="15.3"/><path d="M20,12.8 V26.2 M13.3,19.5 H26.7"/></svg>
<svg width="40" height="40" style="left:1306px;top:604px" fill="none" stroke="#4d5b7c" stroke-width="2.2" stroke-linecap="round"><path d="M12.5,6.3 H30.5 M12.5,12.8 H30.5 M12.5,19.2 H20"/><path d="M6,6.3 H6.2 M6,12.8 H6.2 M6,19.2 H6.2" stroke-width="2.6"/><circle cx="30" cy="26.5" r="8.3" stroke-width="2"/><path d="M30,22.2 V30.8 M25.7,26.5 H34.3" stroke-width="2"/></svg>
<div class="t" style="left:927.00px;top:680.90px;font-size:28px;line-height:28px;color:#1e232b;font-weight:400;letter-spacing:-0.25px">Parameter name</div>
<svg width="28.2" height="28.2" style="left:1147.9px;top:677.5px" fill="none" stroke="#3a3ad8" stroke-width="1.55" stroke-linecap="round"><circle cx="14.1" cy="14.1" r="11.1"/><circle cx="13.81" cy="9.45" r="1.04" fill="#3a3ad8" stroke="none"/><path d="M12.24,12.74 H14.24 V16.68 Q14.24,18.18 15.75,18.18 H16.96" stroke-width="1.55" stroke-linecap="butt"/></svg>
<div class="a" style="left:926px;top:724px;width:655px;height:63px;border:2px solid #cbd0dc;border-radius:7px;background:#fff"></div>
<div class="t" style="left:949.30px;top:743.00px;font-size:28px;line-height:28px;color:#1e232b;font-weight:400;">name</div>
<div class="t" style="left:1635.00px;top:680.90px;font-size:28px;line-height:28px;color:#1e232b;font-weight:400;letter-spacing:0px">Parameter type</div>
<svg width="28.2" height="28.2" style="left:1841.5px;top:677.5px" fill="none" stroke="#3a3ad8" stroke-width="1.55" stroke-linecap="round"><circle cx="14.1" cy="14.1" r="11.1"/><circle cx="13.81" cy="9.45" r="1.04" fill="#3a3ad8" stroke="none"/><path d="M12.24,12.74 H14.24 V16.68 Q14.24,18.18 15.75,18.18 H16.96" stroke-width="1.55" stroke-linecap="butt"/></svg>
<div class="a" style="left:1634px;top:724px;width:655.5px;height:63px;border:2px solid #cbd0dc;border-radius:7px;background:#fff"></div>
<div class="t" style="left:1657.20px;top:740.80px;font-size:28px;line-height:28px;color:#1e232b;font-weight:400;">User Input</div>
<svg width="24" height="14" style="left:2253.6px;top:749.8px"><path d="M0,0 H20 L10,10.5 Z" fill="#000"/></svg>
<div class="t" style="left:2343.00px;top:680.90px;font-size:28px;line-height:28px;color:#1e232b;font-weight:400;letter-spacing:0px">Form input element</div>
<svg width="28.2" height="28.2" style="left:2599.9px;top:677.5px" fill="none" stroke="#3a3ad8" stroke-width="1.55" stroke-linecap="round"><circle cx="14.1" cy="14.1" r="11.1"/><circle cx="13.81" cy="9.45" r="1.04" fill="#3a3ad8" stroke="none"/><path d="M12.24,12.74 H14.24 V16.68 Q14.24,18.18 15.75,18.18 H16.96" stroke-width="1.55" stroke-linecap="butt"/></svg>
<div class="a" style="left:2344px;top:724px;width:244px;height:64px;background:#e3e3e3;border-radius:14px"></div>
<div class="t" style="left:2371.50px;top:742.30px;font-size:28px;line-height:28px;color:#3a3d42;font-weight:400;">input</div>
<svg width="24" height="24" style="left:2548px;top:744.5px" fill="none" stroke="#9b9b9b" stroke-width="4.2" stroke-linecap="round"><path d="M4.5,4.5 L19.5,19.5 M19.5,4.5 L4.5,19.5"/></svg>
<div class="t" style="left:3052.00px;top:680.90px;font-size:28px;line-height:28px;color:#1e232b;font-weight:400;">Actions</div>
<svg width="36" height="36" style="left:3050px;top:736px" fill="none" stroke="#d42a2a" stroke-width="2.2" stroke-linejoin="round"><path d="M4,8.8 H32 M12.6,8.8 V4.8 A1.5,1.5 0 0 1 14.1,3.3 H21.9 A1.5,1.5 0 0 1 23.4,4.8 V8.8 M7.6,8.8 L9.2,30.5 A2.5,2.5 0 0 0 11.7,33 H24.3 A2.5,2.5 0 0 0 26.8,30.5 L28.4,8.8 M15,15.5 V25.5 M21,15.5 V25.5"/></svg>
<div class="t" style="left:927.00px;top:902.91px;font-size:32px;line-height:32px;color:#1e232b;font-weight:700;">Confirmation Dialog</div>
<div class="t" style="left:927.00px;top:971.00px;font-size:28px;line-height:28px;color:#1e232b;font-weight:400;letter-spacing:0px">Dialog Type</div>
<svg width="28.2" height="28.2" style="left:1087.9px;top:967.6px" fill="none" stroke="#3a3ad8" stroke-width="1.55" stroke-linecap="round"><circle cx="14.1" cy="14.1" r="11.1"/><circle cx="13.81" cy="9.45" r="1.04" fill="#3a3ad8" stroke="none"/><path d="M12.24,12.74 H14.24 V16.68 Q14.24,18.18 15.75,18.18 H16.96" stroke-width="1.55" stroke-linecap="butt"/></svg>
<div class="a" style="left:926px;top:1014px;width:1364px;height:63px;border:2px solid #cbd0dc;border-radius:7px;background:#fff"></div>
<div class="t" style="left:949.20px;top:1030.80px;font-size:28px;line-height:28px;color:#1e232b;font-weight:400;">No confirmation</div>
<svg width="24" height="14" style="left:2254.1px;top:1039.8px"><path d="M0,0 H20 L10,10.5 Z" fill="#000"/></svg>
<div class="t" style="left:927.00px;top:1164.51px;font-size:32px;line-height:32px;color:#1e232b;font-weight:700;">Notifications</div>
<div class="t" style="left:927.00px;top:1235.10px;font-size:28px;line-height:28px;color:#1e232b;font-weight:400;letter-spacing:0px">Success notifications</div>
<svg width="28.2" height="28.2" style="left:1207.5px;top:1231.7px" fill="none" stroke="#3a3ad8" stroke-width="1.55" stroke-linecap="round"><circle cx="14.1" cy="14.1" r="11.1"/><circle cx="13.81" cy="9.45" r="1.04" fill="#3a3ad8" stroke="none"/><path d="M12.24,12.74 H14.24 V16.68 Q14.24,18.18 15.75,18.18 H16.96" stroke-width="1.55" stroke-linecap="butt"/></svg>
<div class="a" style="left:926px;top:1276px;width:1364px;height:63px;border:2px solid #cbd0dc;border-radius:7px;background:#fff"></div>
<div class="t" style="left:949.20px;top:1292.80px;font-size:28px;line-height:28px;color:#1e232b;font-weight:400;">None</div>
<svg width="24" height="14" style="left:2254.1px;top:1301.8px"><path d="M0,0 H20 L10,10.5 Z" fill="#000"/></svg>
<div class="t" style="left:927.00px;top:1371.00px;font-size:28px;line-height:28px;color:#1e232b;font-weight:400;letter-spacing:0px">Failure notifications</div>
<svg width="28.2" height="28.2" style="left:1185.9px;top:1367.6000000000001px" fill="none" stroke="#3a3ad8" stroke-width="1.55" stroke-linecap="round"><circle cx="14.1" cy="14.1" r="11.1"/><circle cx="13.81" cy="9.45" r="1.04" fill="#3a3ad8" stroke="none"/><path d="M12.24,12.74 H14.24 V16.68 Q14.24,18.18 15.75,18.18 H16.96" stroke-width="1.55" stroke-linecap="butt"/></svg>
<div class="a" style="left:926px;top:1412px;width:1364px;height:63px;border:2px solid #cbd0dc;border-radius:7px;background:#fff"></div>
<div class="t" style="left:949.20px;top:1428.80px;font-size:28px;line-height:28px;color:#1e232b;font-weight:400;">None</div>
<svg width="24" height="14" style="left:2254.1px;top:1437.8px"><path d="M0,0 H20 L10,10.5 Z" fill="#000"/></svg>
<div class="t" style="left:927.00px;top:1564.51px;font-size:32px;line-height:32px;color:#1e232b;font-weight:700;">Follow-up Actions</div>
<div class="t" style="left:927.00px;top:1633.50px;font-size:28px;line-height:28px;color:#1e232b;font-weight:400;letter-spacing:0px">Behaviour on success</div>
<svg width="28.2" height="28.2" style="left:1213.9px;top:1630.1000000000001px" fill="none" stroke="#3a3ad8" stroke-width="1.55" stroke-linecap="round"><circle cx="14.1" cy="14.1" r="11.1"/><circle cx="13.81" cy="9.45" r="1.04" fill="#3a3ad8" stroke="none"/><path d="M12.24,12.74 H14.24 V16.68 Q14.24,18.18 15.75,18.18 H16.96" stroke-width="1.55" stroke-linecap="butt"/></svg>
<div class="a" style="left:926px;top:1676px;width:1364px;height:63px;border:2px solid #cbd0dc;border-radius:7px;background:#fff"></div>
<div class="t" style="left:949.20px;top:1692.80px;font-size:28px;line-height:28px;color:#1e232b;font-weight:400;">Navigate to a new page</div>
<svg width="24" height="14" style="left:2254.1px;top:1701.8px"><path d="M0,0 H20 L10,10.5 Z" fill="#000"/></svg>
<div class="t" style="left:927.00px;top:1769.40px;font-size:28px;line-height:28px;color:#1e232b;font-weight:400;letter-spacing:0px">Behaviour on failure</div>
<svg width="28.2" height="28.2" style="left:1189.9px;top:1766.0px" fill="none" stroke="#3a3ad8" stroke-width="1.55" stroke-linecap="round"><circle cx="14.1" cy="14.1" r="11.1"/><circle cx="13.81" cy="9.45" r="1.04" fill="#3a3ad8" stroke="none"/><path d="M12.24,12.74 H14.24 V16.68 Q14.24,18.18 15.75,18.18 H16.96" stroke-width="1.55" stroke-linecap="butt"/></svg>
<div class="a" style="left:926px;top:1812px;width:1364px;height:63px;border:2px solid #cbd0dc;border-radius:7px;background:#fff"></div>
<div class="t" style="left:949.20px;top:1828.80px;font-size:28px;line-height:28px;color:#1e232b;font-weight:400;">None</div>
<svg width="24" height="14" style="left:2254.1px;top:1837.8px"><path d="M0,0 H20 L10,10.5 Z" fill="#000"/></svg>
<div class="t" style="left:2343.50px;top:1634.00px;font-size:28px;line-height:28px;color:#1e232b;font-weight:400;letter-spacing:-0.6px">Success URL</div>
<svg width="28.2" height="28.2" style="left:2522.3px;top:1630.6000000000001px" fill="none" stroke="#3a3ad8" stroke-width="1.55" stroke-linecap="round"><circle cx="14.1" cy="14.1" r="11.1"/><circle cx="13.81" cy="9.45" r="1.04" fill="#3a3ad8" stroke="none"/><path d="M12.24,12.74 H14.24 V16.68 Q14.24,18.18 15.75,18.18 H16.96" stroke-width="1.55" stroke-linecap="butt"/></svg>
<div class="a" style="left:2343px;top:1675.5px;width:1363px;height:63.5px;border:2px solid #cbd0dc;border-radius:7px;background:#fff"></div>
<div class="t" style="left:2364.50px;top:1693.90px;font-size:28px;line-height:28px;color:#1e232b;font-weight:400;letter-spacing:0.5px">/project/{result.id}</div>
<svg width="60" height="60" style="left:3750px;top:270px" fill="none" stroke="#4d5b7c" stroke-width="2.7" stroke-linecap="round"><path d="M16.3,11.6 V13.2 M16.3,22 V25.6 M16.3,23.4 H22 M28.9,23.4 H33.9 M40.6,23.4 H42 M16.3,33 V38.7 M16.3,44.7 V47.3 A3,3 0 0 0 19.3,50.3 H22 M28.9,50.3 H33.9 M40.6,50.3 H42"/><path d="M43.35,16.35 A1.5,1.5 0 0 1 44.85,14.85 H50.25 A5,5 0 0 1 55.25,19.85 V27.15 A1.5,1.5 0 0 1 53.75,28.65 H44.85 A1.5,1.5 0 0 1 43.35,27.15 Z"/><path d="M43.35,43.5 A1.5,1.5 0 0 1 44.85,42 H50.25 A5,5 0 0 1 55.25,47 V54.4 A1.5,1.5 0 0 1 53.75,55.9 H44.85 A1.5,1.5 0 0 1 43.35,54.4 Z"/></svg>
<div class="t" style="left:3686.70px;width:200px;text-align:center;top:333.72px;font-size:21px;line-height:21px;color:#586989;font-weight:400;">Widgets</div>
<svg width="60" height="60" style="left:3755px;top:410px" fill="none" stroke="#4d5b7c" stroke-width="2.7" stroke-linecap="round"><ellipse cx="30.9" cy="10.5" rx="10.6" ry="4.5"/><path d="M20.3,10.5 V23.5 C20.3,26 25,28 30.9,28 C36.8,28 41.5,26 41.5,23.5 V10.5 M20.3,17 C20.3,19.5 25,21.5 30.9,21.5 C36.8,21.5 41.5,19.5 41.5,17"/><path d="M12.6,27.6 V24.5 A3.5,3.5 0 0 1 15.6,21 M49.1,27.6 V24.5 A3.5,3.5 0 0 0 46.1,21"/><rect x="8.2" y="34.3" width="18.6" height="12.6" rx="1.5"/><path d="M17.5,47 V52 M12.5,52.5 H22.5"/><rect x="35.2" y="34.3" width="18.6" height="12.6" rx="1.5"/><path d="M44.5,47 V52 M39.5,52.5 H49.5"/></svg>
<div class="t" style="left:3686.70px;width:200px;text-align:center;top:470.22px;font-size:21px;line-height:21px;color:#586989;font-weight:400;">Shared</div>
<div class="t" style="left:3686.70px;width:200px;text-align:center;top:494.22px;font-size:21px;line-height:21px;color:#586989;font-weight:400;">Comp.</div>
<svg width="60" height="60" style="left:3756px;top:570px" fill="none" stroke="#4d5b7c" stroke-width="2.7" stroke-linecap="round" stroke-linejoin="round"><path d="M9,7 H51.5 A1.8,1.8 0 0 1 53.2,9 L47.6,50.5 A2.5,2.5 0 0 1 45,52.8 H16 A2.5,2.5 0 0 1 13.4,50.5 L7.3,9 A1.8,1.8 0 0 1 9,7 Z"/><path d="M19.5,26 A11.5,11.5 0 0 1 41,23 M41.5,17 V23.8 H34.8 M41.5,33.5 A11.5,11.5 0 0 1 20,36.5 M19.5,43 V36.2 H26.2"/></svg>
<div class="t" style="left:3686.70px;width:200px;text-align:center;top:630.22px;font-size:21px;line-height:21px;color:#586989;font-weight:400;">Recycle</div>
<div class="t" style="left:3686.70px;width:200px;text-align:center;top:654.22px;font-size:21px;line-height:21px;color:#586989;font-weight:400;">Bin</div>
<svg width="60" height="60" style="left:3756px;top:730px" fill="none" stroke="#4d5b7c" stroke-width="2.7" stroke-linecap="round" stroke-linejoin="round"><rect x="7.5" y="8.5" width="45.8" height="34.5" rx="4"/><path d="M7.5,35 H53.3 M30.2,8.5 V35 M26.5,43 L24.5,51.8 M34,43 L36,51.8 M20,52 H40.5"/><path d="M13.5,15.5 H16.5 M20,15.5 H24 M13.5,20.5 H16.5 M20,20.5 H24 M13.5,26.5 H24"/><circle cx="38" cy="16" r="1.8" fill="#4d5b7c" stroke="none"/><path d="M30.5,30 C36,23 41,20.5 52.5,29"/></svg>
<div class="t" style="left:3686.70px;width:200px;text-align:center;top:790.22px;font-size:21px;line-height:21px;color:#586989;font-weight:400;">Preview</div>
<div class="t" style="left:3295.00px;top:2123.52px;font-size:21px;line-height:21px;color:#8b9099;font-weight:400;">Structr 6.2-SNAPSHOT build <span style="color:#5a6a8c;text-decoration:underline">e415d</span> (202602101721)</div>
</body></html>
